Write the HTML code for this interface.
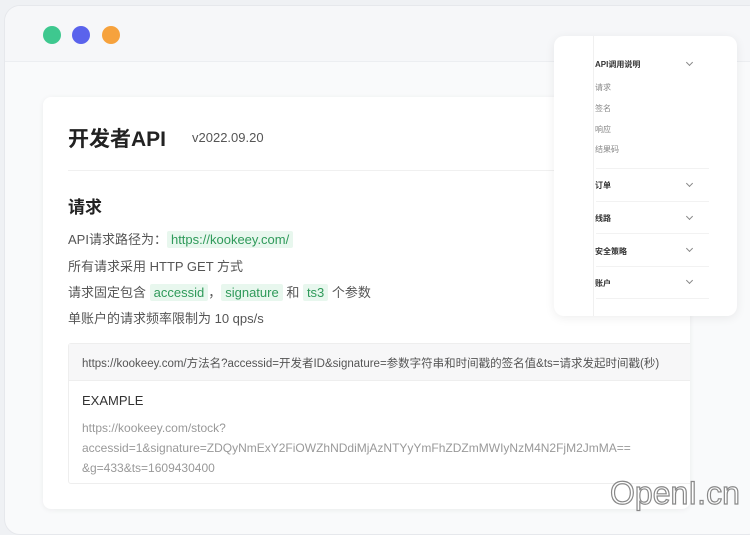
<!DOCTYPE html>
<html><head><meta charset="utf-8"><style>
*{margin:0;padding:0;box-sizing:border-box}
body{width:750px;height:517px;overflow:hidden;background:#eff1f4;font-family:"Liberation Sans","Noto Sans CJK SC",sans-serif;position:relative}
.win{position:absolute;left:4px;top:5px;width:760px;height:530px;border-radius:16px;background:#f9fafb;border:1px solid #e6e8ec}
.hdr{position:absolute;left:0;top:0;right:0;height:56px;background:#f6f7f9;border-bottom:1px solid #eceef1;border-radius:16px 0 0 0}
.dot{position:absolute;top:20px;width:18px;height:18px;border-radius:50%}
.card{position:absolute;left:43px;top:97px;width:647px;height:412px;background:#fff;border-radius:8px;box-shadow:0 1px 6px rgba(0,0,0,.06);overflow:hidden}
h1{position:absolute;left:25px;top:26px;font-size:21px;font-weight:bold;color:#222}
.ver{position:absolute;left:149px;top:33px;font-size:13px;color:#555}
.sep{position:absolute;left:25px;right:0;top:73px;border-top:1px solid #f0f0f0}
h2{position:absolute;left:25px;top:96px;font-size:17px;font-weight:bold;color:#222}
.p{position:absolute;left:25px;font-size:13px;color:#555}
.g{background:#e8f7ee;color:#2f9a5a;padding:1px 4px;border-radius:2px}
.code{position:absolute;left:25px;top:246px;width:640px;height:141px;border:1px solid #eee;border-radius:3px}
.ch{height:37px;background:#f7f7f8;border-bottom:1px solid #eee;font-size:11.5px;color:#555;padding:11px 13px;white-space:nowrap}
.ex{padding:12px 13px 10px;font-size:13px;color:#333}
.exl{padding:0 13px;font-size:12px;color:#999;line-height:20px;white-space:nowrap}
.side{position:absolute;left:554px;top:36px;width:183px;height:280px;background:#fff;border-radius:10px;box-shadow:0 2px 10px rgba(0,0,0,.07)}
.vl{position:absolute;left:39px;top:0;bottom:0;border-left:1px solid #f0f0f0}
.it{position:absolute;left:41px;font-size:8px;color:#333;font-weight:bold}
.sub{position:absolute;left:41px;font-size:8px;color:#888}
.chev{position:absolute;left:133px;width:5px;height:5px;border-right:1px solid #888;border-bottom:1px solid #888;transform:rotate(45deg)}
.ln{position:absolute;left:42px;width:113px;border-top:1px solid #f2f2f2}
.wm{position:absolute;left:610px;top:475px;font-size:32px;color:#fff;-webkit-text-stroke:1.2px #888;font-family:"Liberation Sans",sans-serif}
</style></head><body>
<div class="win"><div class="hdr">
<div class="dot" style="left:38px;background:#3ec88f"></div>
<div class="dot" style="left:67px;background:#5a63ec"></div>
<div class="dot" style="left:97px;background:#f6a23d"></div>
</div></div>
<div class="card">
<h1>开发者API</h1><div class="ver">v2022.09.20</div>
<div class="sep"></div>
<h2>请求</h2>
<div class="p" style="top:132px">API请求路径为：<span class="g">https://kookeey.com/</span></div>
<div class="p" style="top:159px">所有请求采用 HTTP GET 方式</div>
<div class="p" style="top:185px">请求固定包含 <span class="g">accessid</span>，<span class="g">signature</span> 和 <span class="g">ts3</span> 个参数</div>
<div class="p" style="top:211px">单账户的请求频率限制为 10 qps/s</div>
<div class="code">
<div class="ch">https://kookeey.com/方法名?accessid=开发者ID&amp;signature=参数字符串和时间戳的签名值&amp;ts=请求发起时间戳(秒)</div>
<div class="ex">EXAMPLE</div>
<div class="exl">https://kookeey.com/stock?<br>accessid=1&amp;signature=ZDQyNmExY2FiOWZhNDdiMjAzNTYyYmFhZDZmMWIyNzM4N2FjM2JmMA==<br>&amp;g=433&amp;ts=1609430400</div>
</div>
</div>
<div class="side">
<div class="vl"></div>
<div class="it" style="top:23px">API调用说明</div><div class="chev" style="top:24px"></div>
<div class="sub" style="top:46px">请求</div>
<div class="sub" style="top:67px">签名</div>
<div class="sub" style="top:88px">响应</div>
<div class="sub" style="top:108px">结果码</div>
<div class="ln" style="top:132px"></div>
<div class="it" style="top:144px">订单</div><div class="chev" style="top:145px"></div>
<div class="ln" style="top:165px"></div>
<div class="it" style="top:177px">线路</div><div class="chev" style="top:178px"></div>
<div class="ln" style="top:197px"></div>
<div class="it" style="top:210px">安全策略</div><div class="chev" style="top:210px"></div>
<div class="ln" style="top:230px"></div>
<div class="it" style="top:242px">账户</div><div class="chev" style="top:242px"></div>
<div class="ln" style="top:262px"></div>
</div>
<div class="wm">OpenI.cn</div>
</body></html>
